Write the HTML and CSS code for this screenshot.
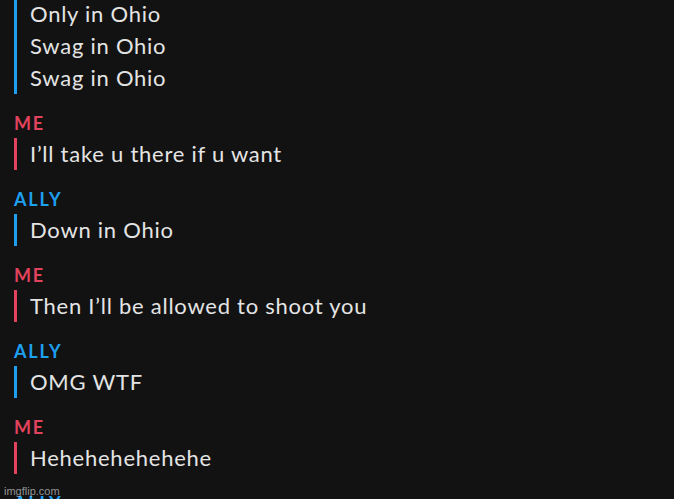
FILE: index.html
```html
<!DOCTYPE html>
<html>
<head>
    <title>Chat</title>
    <link rel="stylesheet" href="styles.css">
</head>
<body>

<div class="chat">
    <div class="group ally first">
        <div class="msgs">
            <div class="msg">Only in Ohio</div>
            <div class="msg">Swag in Ohio</div>
            <div class="msg">Swag in Ohio</div>
        </div>
    </div>

    <div class="group me">
        <div class="name">ME</div>
        <div class="msgs">
            <div class="msg">I’ll take u there if u want</div>
        </div>
    </div>

    <div class="group ally">
        <div class="name">ALLY</div>
        <div class="msgs">
            <div class="msg">Down in Ohio</div>
        </div>
    </div>

    <div class="group me">
        <div class="name">ME</div>
        <div class="msgs">
            <div class="msg">Then I’ll be allowed to shoot you</div>
        </div>
    </div>

    <div class="group ally">
        <div class="name">ALLY</div>
        <div class="msgs">
            <div class="msg">OMG WTF</div>
        </div>
    </div>

    <div class="group me">
        <div class="name">ME</div>
        <div class="msgs">
            <div class="msg">Hehehehehehehe</div>
        </div>
    </div>

    <div class="group ally">
        <div class="name">ALLY</div>
    </div>
</div>

<div class="watermark">imgflip.com</div>

</body>
</html>
```

FILE: styles.css
```css
html, body { margin: 0; padding: 0; height: 100%; overflow: hidden; }
body { background: #121212; font-family: Lato, "Noto Sans", sans-serif; }

.chat { margin-top: -2px; padding-left: 14px; }
.group { margin-bottom: 19px; }
.group .name { font-size: 18px; font-weight: bold; line-height: 20px; letter-spacing: 1.8px; margin-bottom: 5px; }
.group .msgs { border-left: 3px solid; padding-left: 13px; }
.group .msg { color: #e4e4e4; font-size: 22px; line-height: 32px; letter-spacing: 0.75px; }

.me .name { color: #e2425d; }
.me .msgs { border-color: #e2425d; }
.ally .name { color: #1e9ff0; }
.ally .msgs { border-color: #1e9ff0; }

.watermark { position: absolute; left: 4px; bottom: 2px; font-family: "Liberation Sans", sans-serif; font-size: 11px; color: rgba(255, 255, 255, 0.55); }
```
